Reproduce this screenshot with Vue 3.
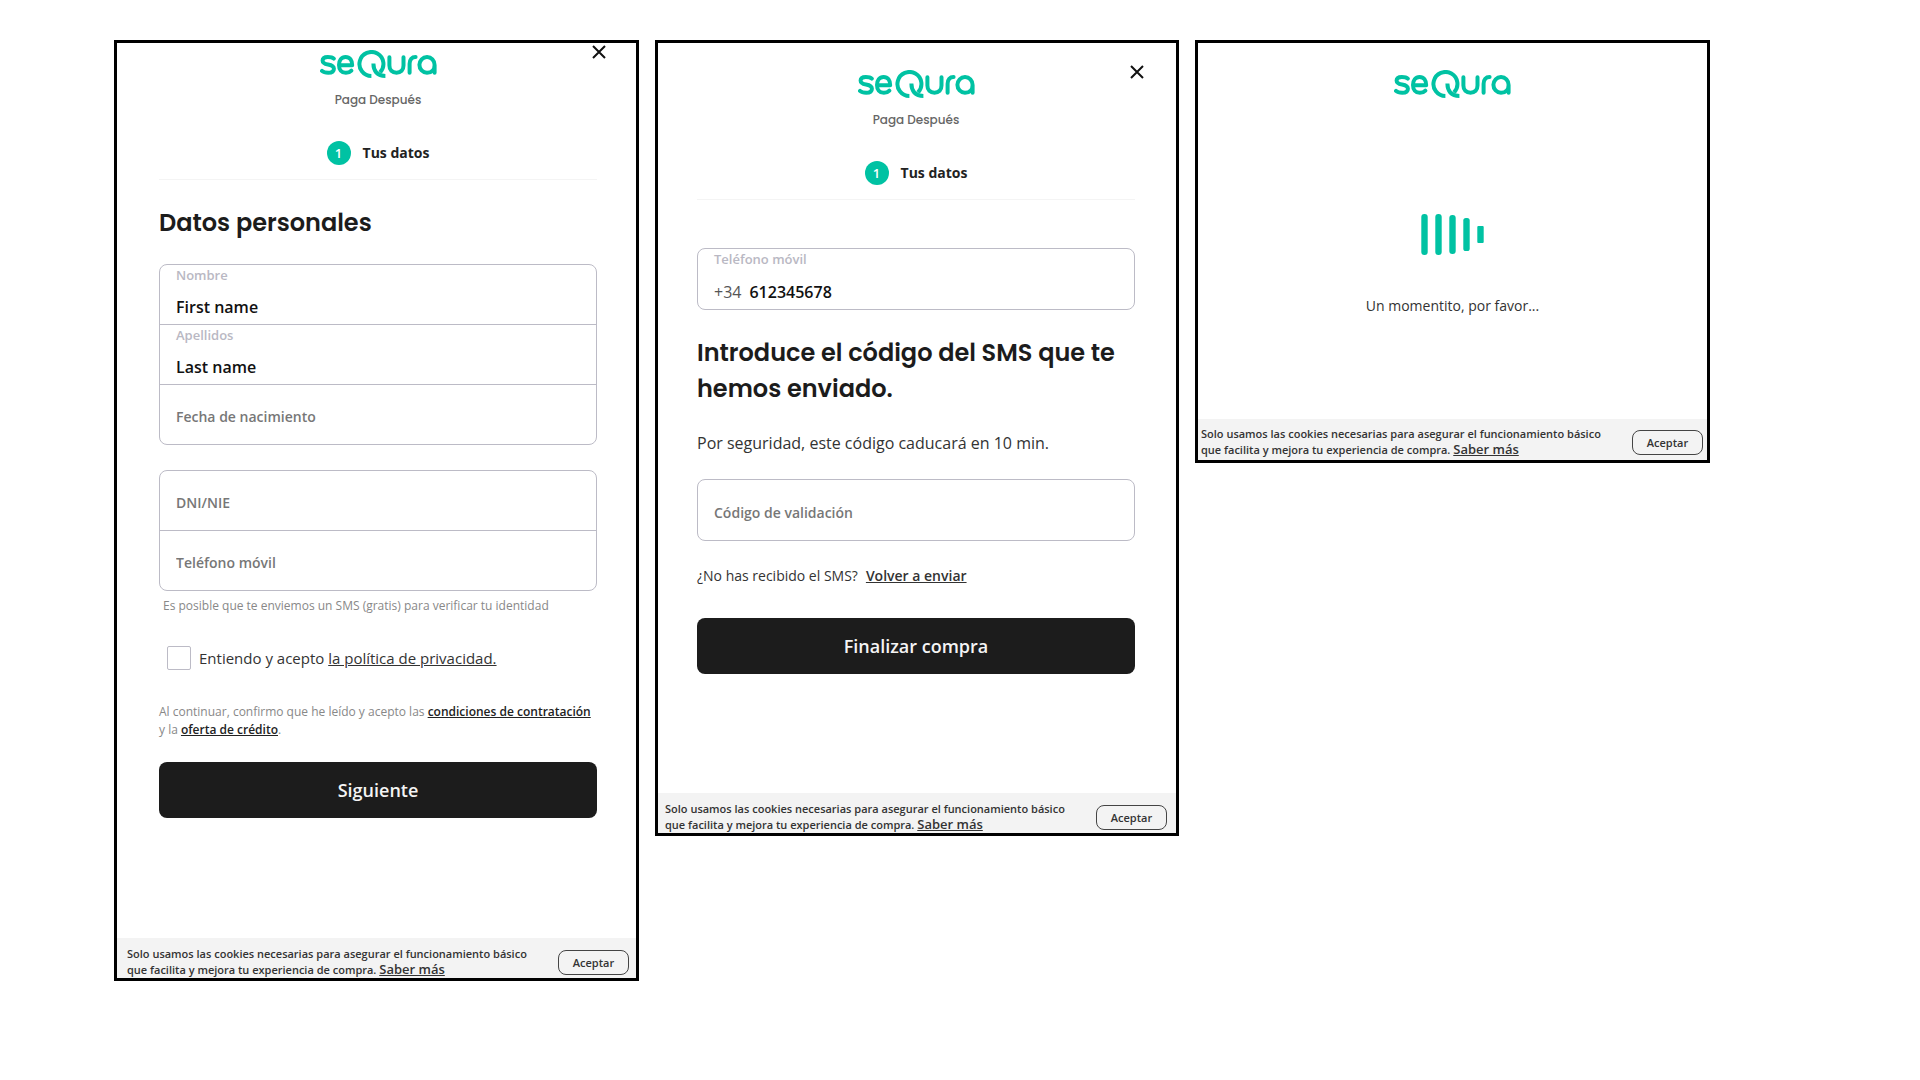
<script setup>
import { ref } from 'vue'

const firstName = ref('First name')
const lastName = ref('Last name')
const birthDate = ref('')
const idNumber = ref('')
const phone = ref('')
const confirmedPhone = ref('612345678')
const code = ref('')
const accepted = ref(false)
</script>

<template>
  <svg class="sprite" aria-hidden="true">
    <symbol id="logo" viewBox="0 0 117 28" preserveAspectRatio="none">
      <g fill="none" stroke="#00c2a3" stroke-width="4" stroke-linecap="round" stroke-linejoin="round">
        <path d="M13.8 8.6C12.4 7.2 10.2 6.9 7.8 6.9C4.4 6.9 2.6 8.3 2.6 10.5C2.6 13.1 4.6 13.9 8 14.5C11.8 15.1 13.9 16 13.9 18.7C13.9 21.5 11.8 22.7 8.2 22.7C5.4 22.7 3.4 22.2 2 20.8" />
        <path d="M19.4 15.2H32.2C32.2 10.4 29.8 6.9 25.6 6.9C21.4 6.9 19 10.2 19 14.9C19 19.7 21.5 22.8 25.9 22.8C28.2 22.8 30 22.1 31.4 20.6" />
        <path stroke-linecap="butt" d="M51.4 26A12 12 0 1 1 60 22.4" />
        <path stroke-linecap="butt" d="M53.4 13.6C53.4 21 57.2 26 65.4 26" />
        <path d="M69.4 7.3V15.6C69.4 20.2 72.2 22.7 76.5 22.7C80.8 22.7 83.5 20.2 83.5 15.6V7.3" />
        <path d="M89.6 22.8V13.8C89.6 9.4 91.8 7.1 95.6 7.1" />
        <path d="M114.6 22.8V15A7.6 7.9 0 1 0 107 22.8C111.2 22.8 114.6 19.8 114.6 15" />
      </g>
    </symbol>
  </svg>

  <main class="board">
    <section class="panel panel-data">
      <header class="head">
        <svg class="logo" role="img" aria-label="seQura"><use href="#logo" /></svg>
        <button class="close" type="button" aria-label="Cerrar">
          <svg viewBox="0 0 14 14"><path d="M1 1L13 13M13 1L1 13" /></svg>
        </button>
        <p class="product">Paga Después</p>
        <div class="step"><span class="dot">1</span>Tus datos</div>
      </header>

      <form class="body" @submit.prevent>
        <h1 class="title">Datos personales</h1>
        <div class="group">
          <div class="field">
            <label for="first">Nombre</label>
            <div class="entry"><input id="first" v-model="firstName" type="text" /></div>
          </div>
          <div class="field">
            <label for="last">Apellidos</label>
            <div class="entry"><input id="last" v-model="lastName" type="text" /></div>
          </div>
          <div class="field">
            <div class="entry"><input v-model="birthDate" type="text" aria-label="Fecha de nacimiento" placeholder="Fecha de nacimiento" /></div>
          </div>
        </div>
        <div class="group group-id">
          <div class="field">
            <div class="entry"><input v-model="idNumber" type="text" aria-label="DNI/NIE" placeholder="DNI/NIE" /></div>
          </div>
          <div class="field">
            <div class="entry"><input v-model="phone" type="tel" aria-label="Teléfono móvil" placeholder="Teléfono móvil" /></div>
          </div>
        </div>
        <p class="hint">Es posible que te enviemos un SMS (gratis) para verificar tu identidad</p>
        <div class="consent">
          <input id="privacy" v-model="accepted" type="checkbox" />
          <label for="privacy">Entiendo y acepto <a href="#privacidad">la política de privacidad.</a></label>
        </div>
        <p class="terms">
          Al continuar, confirmo que he leído y acepto las <a href="#condiciones">condiciones de contratación</a>
          y la <a href="#oferta">oferta de crédito</a>.
        </p>
        <button class="primary" type="submit">Siguiente</button>
      </form>

      <footer class="cookies">
        <p>Solo usamos las cookies necesarias para asegurar el funcionamiento básico que facilita y mejora tu experiencia de compra. <a href="#cookies">Saber más</a></p>
        <button type="button">Aceptar</button>
      </footer>
    </section>

    <section class="panel panel-code">
      <header class="head">
        <svg class="logo" role="img" aria-label="seQura"><use href="#logo" /></svg>
        <button class="close" type="button" aria-label="Cerrar">
          <svg viewBox="0 0 14 14"><path d="M1 1L13 13M13 1L1 13" /></svg>
        </button>
        <p class="product">Paga Después</p>
        <div class="step"><span class="dot">1</span>Tus datos</div>
      </header>

      <form class="body" @submit.prevent>
        <div class="group group-phone">
          <div class="field">
            <label for="confirmed">Teléfono móvil</label>
            <div class="entry"><span>+34</span><input id="confirmed" v-model="confirmedPhone" type="tel" /></div>
          </div>
        </div>
        <h2 class="title title-code">Introduce el código del SMS que te hemos enviado.</h2>
        <p class="expiry">Por seguridad, este código caducará en 10 min.</p>
        <div class="group">
          <div class="field">
            <div class="entry"><input v-model="code" type="text" aria-label="Código de validación" placeholder="Código de validación" /></div>
          </div>
        </div>
        <p class="resend">¿No has recibido el SMS?<a href="#reenviar">Volver a enviar</a></p>
        <button class="primary" type="submit">Finalizar compra</button>
      </form>

      <footer class="cookies">
        <p>Solo usamos las cookies necesarias para asegurar el funcionamiento básico que facilita y mejora tu experiencia de compra. <a href="#cookies">Saber más</a></p>
        <button type="button">Aceptar</button>
      </footer>
    </section>

    <section class="panel panel-wait">
      <svg class="logo" role="img" aria-label="seQura"><use href="#logo" /></svg>
      <svg class="loader" viewBox="0 0 63 41" aria-hidden="true">
        <rect x="0.3" y="0" width="6.4" height="41" rx="3" />
        <rect x="14.3" y="0" width="6.4" height="41" rx="3" />
        <rect x="28.3" y="1" width="6.4" height="39" rx="3" />
        <rect x="42.3" y="4" width="6.4" height="33" rx="2.6" />
        <rect x="56.3" y="12" width="6.4" height="17" rx="1" />
      </svg>
      <p class="wait" role="status">Un momentito, por favor...</p>

      <footer class="cookies">
        <p>Solo usamos las cookies necesarias para asegurar el funcionamiento básico que facilita y mejora tu experiencia de compra. <a href="#cookies">Saber más</a></p>
        <button type="button">Aceptar</button>
      </footer>
    </section>
  </main>
</template>

<style>
body {
  margin: 0;
  background: #fff;
}
</style>

<style scoped>
* {
  box-sizing: border-box;
}
p,
h1,
h2 {
  margin: 0;
}
a {
  color: inherit;
}
button,
input {
  font-family: inherit;
}
.sprite {
  position: absolute;
  width: 0;
  height: 0;
}
.board {
  display: grid;
  grid-template-columns: 525fr 524fr 515fr;
  gap: 16px;
  align-items: start;
  padding: 40px 210px 40px 114px;
  font-family: "Open Sans", "Noto Sans", sans-serif;
  color: #333;
}
.panel {
  display: flex;
  flex-direction: column;
  border: 3px solid #000;
  background: #fff;
}
.panel-data {
  min-height: 941px;
}
.panel-code {
  min-height: 796px;
}
.panel-wait {
  min-height: 423px;
  align-items: center;
  padding-top: 27px;
}
.logo {
  display: block;
  width: 117px;
  height: 28px;
}
.head {
  position: relative;
  display: flex;
  flex-direction: column;
  align-items: center;
  margin: 0 39px 0 42px;
  padding-top: 7px;
  border-bottom: 1px solid #f4f4f4;
}
.panel-code .head {
  margin: 0 41px 0 39px;
  padding-top: 27px;
}
.close {
  position: absolute;
  top: 2px;
  right: -9px;
  padding: 0;
  border: 0;
  background: none;
  line-height: 0;
}
.panel-code .close {
  top: 22px;
}
.close svg {
  width: 14px;
  height: 14px;
  fill: none;
  stroke: #111;
  stroke-width: 2;
}
.product {
  margin-top: 13px;
  font: 500 12px/18px Poppins, Inter, sans-serif;
  color: #666;
}
.step {
  display: flex;
  align-items: center;
  gap: 12px;
  margin: 31px 0 14px;
  font-size: 14px;
  line-height: 25px;
  font-weight: 700;
  color: #222;
}
.dot {
  width: 24px;
  height: 24px;
  border-radius: 50%;
  background: #00c2a3;
  color: #fff;
  font: 600 13px/24px "Open Sans", sans-serif;
  text-align: center;
}
.body {
  margin: 0 39px 0 42px;
}
.panel-code .body {
  margin: 0 41px 0 39px;
}
.title {
  margin: 25px 0 23px;
  font: 600 24px/36px Poppins, Inter, sans-serif;
  color: #1c1c1c;
}
.group {
  border: 1px solid #bcbbc6;
  border-radius: 8px;
}
.group-id {
  margin-top: 25px;
}
.group-phone {
  margin-top: 48px;
}
.field {
  display: flex;
  flex-direction: column;
  height: 59px;
  padding: 0 16px;
  box-sizing: content-box;
}
.field:only-child {
  height: 60px;
}
.field + .field {
  border-top: 1px solid #bcbbc6;
}
.field label {
  font-size: 13px;
  line-height: 20px;
  font-weight: 600;
  color: #b9b8c3;
}
.entry {
  flex: 1;
  display: flex;
  align-items: center;
  gap: 8px;
  padding-top: 5px;
  font-size: 16px;
  color: #555;
}
.entry:only-child {
  padding-top: 3px;
}
.entry input {
  flex: 1;
  min-width: 0;
  height: 24px;
  padding: 0;
  border: 0;
  outline: 0;
  background: none;
  font-size: 16px;
  font-weight: 600;
  color: #111;
}
.entry input::placeholder {
  font-size: 14px;
  color: #777;
  opacity: 1;
}
.hint {
  margin: 5px 4px 0;
  font-size: 12px;
  line-height: 20px;
  color: #888;
}
.consent {
  display: flex;
  align-items: center;
  gap: 8px;
  margin: 30px 8px 0;
  font-size: 15px;
  line-height: 24px;
}
.consent input {
  appearance: none;
  width: 24px;
  height: 24px;
  margin: 0;
  border: 1px solid #bcbbc6;
  border-radius: 2px;
}
.terms {
  margin-top: 33px;
  font-size: 12px;
  line-height: 18px;
  color: #888;
}
.terms a {
  font-weight: 600;
  color: #222;
}
.primary {
  display: block;
  width: 100%;
  height: 56px;
  margin-top: 23px;
  border: 0;
  border-radius: 8px;
  background: #1c1c1c;
  color: #f4f4f4;
  font-size: 18px;
  font-weight: 600;
}
.title-code {
  margin: 25px 0 24px;
}
.expiry {
  margin-bottom: 24px;
  font-size: 16px;
  line-height: 24px;
}
.resend {
  display: flex;
  gap: 8px;
  margin: 24px 0 31px;
  font-size: 14px;
  line-height: 22px;
}
.resend a {
  font-weight: 600;
}
.loader {
  width: 63px;
  height: 41px;
  margin-top: 116px;
  fill: #00c2a3;
}
.wait {
  margin-top: 39px;
  font-size: 14px;
  line-height: 24px;
}
.cookies {
  display: flex;
  align-items: flex-start;
  justify-content: space-between;
  gap: 24px;
  width: 100%;
  height: 40px;
  margin-top: auto;
  padding: 8px 7px 0 10px;
  background: #f3f3f3;
}
.panel-code .cookies {
  padding: 8px 9px 0 7px;
}
.panel-wait .cookies {
  height: 41px;
  padding: 7px 4px 0 3px;
}
.cookies p {
  font-size: 11px;
  line-height: 16px;
  font-weight: 600;
}
.cookies a {
  font-size: 13px;
  line-height: 15px;
}
.cookies button {
  flex: none;
  width: 71px;
  height: 25px;
  margin-top: 4px;
  padding: 0;
  border: 1px solid #444;
  border-radius: 8px;
  background: none;
  font-size: 11px;
  font-weight: 600;
  color: #333;
}
</style>
